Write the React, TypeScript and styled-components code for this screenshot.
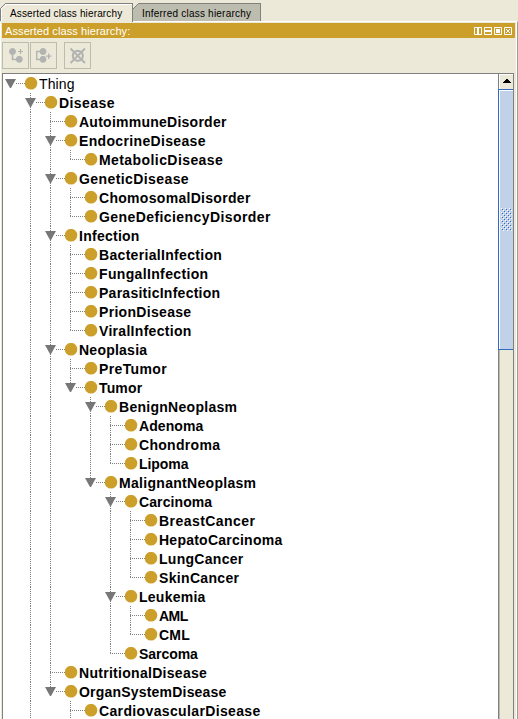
import React from 'react';
import styled, { createGlobalStyle, css } from 'styled-components';

const gold = '#cc9f2a';
const beige = '#ece9d8';
const dots = '#808080';

const GlobalStyle = createGlobalStyle`
  * { box-sizing: border-box; }
  body { margin: 0; overflow: hidden; background: ${beige}; }
`;

const Window = styled.div`
  width: 518px;
  height: 719px;
  overflow: hidden;
  display: flex;
  flex-direction: column;
  background: ${beige};
  color: #000;
  font-family: 'Liberation Sans', Arial, sans-serif;
`;

const TabStrip = styled.div`
  display: flex;
  height: 21px;
  padding-top: 3px;
`;

const Tab = styled.div<{ $active?: boolean; $width: number }>`
  position: relative;
  width: ${p => p.$width}px;
  height: ${p => (p.$active ? 19 : 18)}px;
  padding-left: ${p => (p.$active ? 10 : 9)}px;
  border-top: 1px solid #808080;
  border-right: 1px solid #808080;
  box-shadow: inset 0 1px ${p => (p.$active ? '#fff' : '#bdbdaf')};
  background: ${p => (p.$active ? beige : '#bdbdaf')};
  font-size: 10px;
  line-height: 19px;
  white-space: nowrap;
`;

const TabCorner = styled.svg`
  position: absolute;
  left: 0;
  top: -1px;
`;

const TabText = styled.span<{ $gap: number }>`
  letter-spacing: ${p => p.$gap}px;
`;

const Panel = styled.div`
  flex: 1;
  min-height: 0;
  display: flex;
  flex-direction: column;
  padding: 1px 3px 0 2px;
  border-top: 1px solid #fff;
  border-right: 1px solid #9d9d92;
  box-shadow: inset 1px 0 #fff, inset -1px 0 #fff;
`;

const TitleBar = styled.div`
  flex: none;
  display: flex;
  align-items: center;
  justify-content: space-between;
  height: 15px;
  margin-right: -1px;
  padding: 0 3px;
  background: ${gold};
  color: #fff;
  font-size: 11px;
  line-height: 15px;
`;

const TitleText = styled.span`
  padding-top: 2px;
  letter-spacing: 0.1px;
`;

const Controls = styled.div`
  display: flex;
  gap: 2px;
`;

const Toolbar = styled.div`
  flex: none;
  display: flex;
  height: 35px;
  padding-top: 4px;
`;

const ToolButton = styled.div<{ $gap?: number }>`
  width: 27px;
  height: 27px;
  margin-right: ${p => p.$gap ?? 1}px;
  border: 1px solid #bdbdaf;
  display: flex;
  align-items: center;
  justify-content: center;
`;

const TreeFrame = styled.div`
  flex: 1;
  min-height: 0;
  display: flex;
  border: 1px solid #808080;
  border-bottom: 0;
  background: #fff;
`;

const Tree = styled.div`
  flex: 1;
  min-width: 0;
  margin-left: -3px;
`;

const Row = styled.div`
  display: flex;
  height: 19px;
`;

const verticalDots = css`
  background-image: repeating-linear-gradient(to bottom, ${dots} 0 1px, transparent 1px 2px);
  background-repeat: no-repeat;
`;

const Guide = styled.div<{ $line: boolean }>`
  flex: none;
  width: 20px;
  ${p => p.$line && verticalDots}
  background-size: 1px 100%;
  background-position: 10px 0;
`;

const Elbow = styled.div<{ $stem: 'none' | 'half' | 'full' }>`
  flex: none;
  position: relative;
  width: 25px;
  background-image: repeating-linear-gradient(to right, ${dots} 0 1px, transparent 1px 2px),
    repeating-linear-gradient(to bottom, ${dots} 0 1px, transparent 1px 2px);
  background-repeat: no-repeat;
  background-size: 15px 1px, ${p => (p.$stem === 'none' ? '0 0' : p.$stem === 'half' ? '1px 10px' : '1px 100%')};
  background-position: 10px 9px, 10px 0;
`;

const Arrow = styled.svg`
  position: absolute;
  left: 5px;
  top: 5px;
  background: #fff;
`;

const Dot = styled.svg`
  flex: none;
  margin-top: 3px;
`;

const Label = styled.span<{ $root: boolean; $gap: number }>`
  margin-left: 1px;
  font-size: 14px;
  font-weight: ${p => (p.$root ? 400 : 700)};
  letter-spacing: ${p => p.$gap}px;
  line-height: 20px;
  white-space: nowrap;
`;

const ScrollTrack = styled.div`
  flex: none;
  width: 15px;
  border-left: 1px solid #808080;
  box-shadow: inset 1px 1px #bdbdaf;
  background: ${beige};
  display: flex;
  flex-direction: column;
`;

const ScrollUp = styled.div`
  height: 15px;
  background: ${beige};
  border-top: 1px solid #fff;
  border-left: 1px solid #fff;
  display: flex;
  justify-content: center;
  padding-top: 4px;
`;

const Thumb = styled.div`
  height: 261px;
  margin-left: -1px;
  border: 1px solid #316ac5;
  border-right: 0;
  box-shadow: inset 1px 1px #fff;
  background: #c1d2e8;
  display: flex;
  align-items: center;
  justify-content: center;
`;

type Item = [depth: number, name: string, gap: number];

const items: Item[] = [
  [0, 'Thing', 0.1],
  [1, 'Disease', 0.42],
  [2, 'AutoimmuneDisorder', 0.25],
  [2, 'EndocrineDisease', 0.34],
  [3, 'MetabolicDisease', 0.42],
  [2, 'GeneticDisease', 0.41],
  [3, 'ChomosomalDisorder', 0.3],
  [3, 'GeneDeficiencyDisorder', 0.42],
  [2, 'Infection', 0.26],
  [3, 'BacterialInfection', 0.32],
  [3, 'FungalInfection', 0.35],
  [3, 'ParasiticInfection', 0.26],
  [3, 'PrionDisease', 0.31],
  [3, 'ViralInfection', 0.3],
  [2, 'Neoplasia', 0.24],
  [3, 'PreTumor', 0.36],
  [3, 'Tumor', 0.15],
  [4, 'BenignNeoplasm', 0.28],
  [5, 'Adenoma', 0.07],
  [5, 'Chondroma', 0.3],
  [5, 'Lipoma', -0.07],
  [4, 'MalignantNeoplasm', 0.3],
  [5, 'Carcinoma', 0.1],
  [6, 'BreastCancer', 0.45],
  [6, 'HepatoCarcinoma', 0.24],
  [6, 'LungCancer', 0.29],
  [6, 'SkinCancer', 0.33],
  [5, 'Leukemia', 0.26],
  [6, 'AML', -0.5],
  [6, 'CML', 0.2],
  [5, 'Sarcoma', -0.05],
  [2, 'NutritionalDisease', 0.29],
  [2, 'OrganSystemDisease', 0.2],
  [3, 'CardiovascularDisease', 0.36],
];

// Branches that carry on below the visible part of the list.
const openEnded = new Set([1, 3]);

function continues(index: number, level: number): boolean {
  if (level === 0) return false;
  for (let i = index + 1; i < items.length; i++) {
    if (items[i][0] === level) return true;
    if (items[i][0] < level) return false;
  }
  return openEnded.has(level);
}

function TreeRow({ index }: { index: number }) {
  const [depth, name, gap] = items[index];
  const expanded = index + 1 < items.length && items[index + 1][0] > depth;
  const stem = depth === 0 ? 'none' : continues(index, depth) ? 'full' : 'half';
  return (
    <Row>
      {Array.from({ length: depth }, (_, level) => (
        <Guide key={level} $line={continues(index, level)} />
      ))}
      <Elbow $stem={stem}>
        {expanded && (
          <Arrow width="11" height="9">
            <path d="M0 0H11L6 9H5Z" fill="#777" />
          </Arrow>
        )}
      </Elbow>
      <Dot width="13" height="13">
        <circle cx="6" cy="6.2" r="6.3" fill={gold} />
      </Dot>
      <Label $root={depth === 0} $gap={gap}>{name}</Label>
    </Row>
  );
}

function Corner({ active }: { active?: boolean }) {
  return (
    <TabCorner width="7" height="18">
      <path d="M0 0H6L0 6Z" fill={beige} />
      {active && <path d="M1.5 18V6L6.5 1.5" fill="none" stroke="#fff" />}
      <path d={active ? 'M0.5 18V5.5L5.5 0.5H7' : 'M0 6L5.5 0.5H7'} fill="none" stroke="#808080" />
    </TabCorner>
  );
}

export default function App() {
  return (
    <>
      <GlobalStyle />
      <Window>
        <TabStrip>
          <Tab $active $width={133}>
            <Corner active />
            <TabText $gap={0.14}>Asserted class hierarchy</TabText>
          </Tab>
          <Tab $width={128}>
            <Corner />
            <TabText $gap={0.22}>Inferred class hierarchy</TabText>
          </Tab>
        </TabStrip>
        <Panel>
          <TitleBar>
            <TitleText>Asserted class hierarchy:</TitleText>
            <Controls>
              <svg width="8" height="8" fill="none" stroke="#fff"><path d="M.5 .5H7.5V7.5H.5ZM3.5 0V8M4.5 0V8" /></svg>
              <svg width="8" height="8" fill="none" stroke="#fff"><path d="M.5 .5H7.5V7.5H.5ZM0 3.5H8M0 4.5H8" /></svg>
              <svg width="8" height="8" fill="none" stroke="#fff"><path d="M.5 .5H7.5V7.5H.5Z" /><path d="M2 2H6V6H2Z" fill="#fff" stroke="none" /></svg>
              <svg width="8" height="8" fill="none" stroke="#fff"><path d="M.5 .5H7.5V7.5H.5ZM2 2L6 6M6 2L2 6" /></svg>
            </Controls>
          </TitleBar>
          <Toolbar>
            <ToolButton>
              <svg width="15" height="15" fill="#b3b3b3" stroke="#b3b3b3">
                <circle cx="4.5" cy="3.5" r="3" /><circle cx="11.3" cy="11.3" r="3" />
                <path d="M4.5 5V11.5H9" fill="none" strokeWidth="1.6" /><path d="M12.5 1V6M10 3.5H15" strokeWidth="1.2" />
              </svg>
            </ToolButton>
            <ToolButton $gap={7}>
              <svg width="17" height="15" fill="#b3b3b3" stroke="#b3b3b3">
                <circle cx="8" cy="3.5" r="3" /><circle cx="8" cy="11.3" r="3" />
                <path d="M7 3.5H1.7V11.5H7" fill="none" strokeWidth="1.4" /><path d="M13.7 5.5V11M11 8.2H16.4" strokeWidth="1.3" />
              </svg>
            </ToolButton>
            <ToolButton>
              <svg width="17" height="17" fill="none" stroke="#b3b3b3">
                <circle cx="8.8" cy="8.8" r="5" strokeWidth="2.2" />
                <path d="M1.5 1.5L16 16M16 1.5L1.5 16" strokeWidth="1.9" />
              </svg>
            </ToolButton>
          </Toolbar>
          <TreeFrame>
            <Tree>
              {items.map((_, i) => <TreeRow key={i} index={i} />)}
            </Tree>
            <ScrollTrack>
              <ScrollUp>
                <svg width="8" height="4" shapeRendering="crispEdges"><path d="M3 0H5V1H6V2H7V3H8V4H0V3H1V2H2V1H3Z" /></svg>
              </ScrollUp>
              <Thumb>
                <svg width="11" height="23" shapeRendering="crispEdges">
                  <defs>
                    <pattern id="grip" width="4" height="4" patternUnits="userSpaceOnUse">
                      <path d="M0 0h1v1h-1zM2 2h1v1h-1z" fill="#fff" />
                      <path d="M1 1h1v1h-1zM3 3h1v1h-1z" fill="#316ac5" />
                    </pattern>
                  </defs>
                  <rect width="11" height="23" fill="url(#grip)" />
                </svg>
              </Thumb>
            </ScrollTrack>
          </TreeFrame>
        </Panel>
      </Window>
    </>
  );
}
